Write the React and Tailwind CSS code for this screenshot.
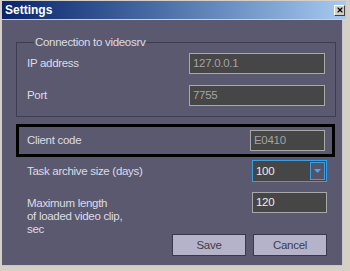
import React from 'react';
import { X } from 'lucide-react';

const inputBox = 'h-[21px] bg-[#464646] border border-[#a8a8a8] flex items-center px-[3px]';

const Field = ({ value, dim, width = 'w-[136px]' }) => (
    <div className={`${inputBox} ${width} ${dim ? 'text-[#a3a3a3]' : 'text-[#ececec]'}`}>{value}</div>
);

export default function App() {
    return (
        <div
            className="w-[350px] h-[271px] bg-[#d4d0c8] pt-[1px] pl-[2px] flex flex-col text-[11.5px] tracking-[-0.3px] leading-[13px]"
            style={{ fontFamily: '"Liberation Sans", Arial, sans-serif' }}
        >
            {/* title bar */}
            <div className="h-[18px] mr-[4px] bg-gradient-to-r from-[#0a246a] to-[#a6caf0] flex items-center justify-between pl-[3px] pr-[1px]">
                <span className="text-white font-bold text-[12px] tracking-normal">Settings</span>
                <div className="w-[11px] h-[11px] bg-[#d4d0c8] border border-t-white border-l-white border-r-[#404040] border-b-[#404040] flex items-center justify-center">
                    <X className="w-[8px] h-[8px] text-black" strokeWidth={3.5} />
                </div>
            </div>

            {/* body */}
            <div className="mt-[1px] flex-1 flex">
                <div className="w-[341px] h-[246px] bg-[#5b596f] border-r border-b border-[#c8c6cc] flex flex-col pl-[14px] text-[#dcdce6]">
                    {/* connection group */}
                    <fieldset className="mt-[16px] w-[320px] border border-[#3e3c52] pl-[10px] pr-[10px] pb-[10px]">
                        <legend className="px-[1px] ml-[7px]">Connection to videosrv</legend>
                        <div className="mt-[4px] flex items-center justify-between">
                            <span>IP address</span>
                            <Field value="127.0.0.1" dim />
                        </div>
                        <div className="mt-[11px] flex items-center justify-between">
                            <span>Port</span>
                            <Field value="7755" dim />
                        </div>
                    </fieldset>

                    {/* client code */}
                    <div className="mt-[7px] w-[319px] border-[3px] border-black pl-[8px] pr-[7px] py-[3px] flex items-center justify-between">
                        <span>Client code</span>
                        <Field value="E0410" dim width="w-[75px]" />
                    </div>

                    {/* archive size */}
                    <div className="mt-[3px] w-[311px] pl-[11px] flex items-center justify-between">
                        <span>Task archive size (days)</span>
                        <div className="w-[75px] h-[22px] bg-[#464646] border border-[#3a9ee0] flex items-center justify-between pl-[3px] pr-[1px] text-[#ececec]">
                            <span>100</span>
                            <div className="w-[15px] h-[18px] border border-[#3a9ee0] bg-[#55536a] flex items-center justify-center">
                                <svg width="7" height="4" viewBox="0 0 7 4">
                                    <path d="M0 0h7L3.5 4z" fill="#3aaef0" />
                                </svg>
                            </div>
                        </div>
                    </div>

                    {/* clip length */}
                    <div className="mt-[10px] w-[311px] pl-[11px] flex items-start justify-between">
                        <span className="mt-[5px]">
                            Maximum length<br />of loaded video clip,<br />sec
                        </span>
                        <Field value="120" width="w-[75px]" />
                    </div>

                    {/* buttons */}
                    <div className="-mt-[2px] w-[311px] flex justify-end gap-[7px]">
                        <button className="w-[74px] h-[22px] bg-[#b5b3c9] border border-[#3a3850] text-[#3d3d4d]">Save</button>
                        <button className="w-[74px] h-[22px] bg-[#b5b3c9] border border-[#3a3850] text-[#3d3d4d]">Cancel</button>
                    </div>
                </div>
            </div>
        </div>
    );
}
